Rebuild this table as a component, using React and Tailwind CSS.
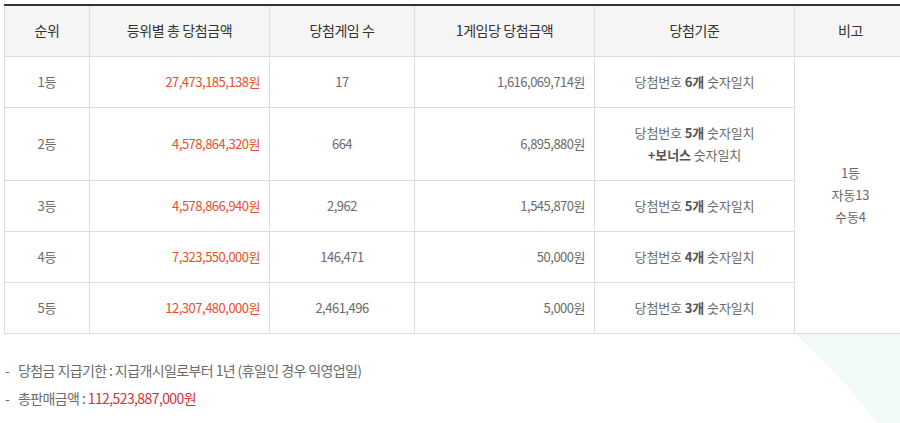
const rows = [
  { rank: '1등', total: '27,473,185,138원', count: '17', per: '1,616,069,714원', rule: [['당첨번호 ', '6개', ' 숫자일치']], h: 'h-[51px]' },
  { rank: '2등', total: '4,578,864,320원', count: '664', per: '6,895,880원', rule: [['당첨번호 ', '5개', ' 숫자일치'], ['', '+보너스', ' 숫자일치']], h: 'h-[73px]' },
  { rank: '3등', total: '4,578,866,940원', count: '2,962', per: '1,545,870원', rule: [['당첨번호 ', '5개', ' 숫자일치']], h: 'h-[51px]' },
  { rank: '4등', total: '7,323,550,000원', count: '146,471', per: '50,000원', rule: [['당첨번호 ', '4개', ' 숫자일치']], h: 'h-[51px]' },
  { rank: '5등', total: '12,307,480,000원', count: '2,461,496', per: '5,000원', rule: [['당첨번호 ', '3개', ' 숫자일치']], h: 'h-[51px]' },
];

const font = { fontFamily: '"Noto Sans CJK KR", "Noto Sans", sans-serif' };

export default function App() {
  return (
    <div className="relative w-[900px] h-[423px] overflow-hidden bg-white text-[13px] tracking-[-0.1px] text-[#6b6b6b]" style={font}>
      <svg className="absolute left-0 top-0" width="900" height="423">
        <path d="M795 334 L900 334 L900 423 L877 423 C860 400 830 364 795 334 Z" fill="#f1faf8" />
      </svg>

      <div className="relative pl-[4px] pt-[4px]">
        <table className="table-fixed border-collapse w-[902px] bg-white border-t-2 border-t-[#333]">
          <colgroup>
            <col className="w-[85px]" />
            <col className="w-[180px]" />
            <col className="w-[145px]" />
            <col className="w-[180px]" />
            <col className="w-[200px]" />
            <col className="w-[112px]" />
          </colgroup>
          <thead>
            <tr className="h-[51px] bg-[#f5f5f5] text-[#333] text-[14px] tracking-[-0.4px]">
              <th className="font-normal border border-[#ddd] border-t-0">순위</th>
              <th className="font-normal border border-[#ddd] border-t-0">등위별 총 당첨금액</th>
              <th className="font-normal border border-[#ddd] border-t-0">당첨게임 수</th>
              <th className="font-normal border border-[#ddd] border-t-0">1게임당 당첨금액</th>
              <th className="font-normal border border-[#ddd] border-t-0">당첨기준</th>
              <th className="font-normal border border-[#ddd] border-t-0">비고</th>
            </tr>
          </thead>
          <tbody>
            {rows.map((r, i) => (
              <tr key={r.rank} className={r.h}>
                <td className="border border-[#ddd] text-center">{r.rank}</td>
                <td className="border border-[#ddd] text-right pr-[9px] tracking-[-0.5px] text-[#e8502a]">{r.total}</td>
                <td className="border border-[#ddd] text-center tracking-[-0.5px]">{r.count}</td>
                <td className="border border-[#ddd] text-right pr-[9px] tracking-[-0.5px]">{r.per}</td>
                <td className="border border-[#ddd] text-center leading-[22px]">
                  {r.rule.map((l, j) => (
                    <div key={j}>
                      {l[0]}<b className="text-[#555] font-semibold">{l[1]}</b>{l[2]}
                    </div>
                  ))}
                </td>
                {i === 0 && (
                  <td rowSpan={5} className="border border-[#ddd] text-center leading-[22px]">
                    <div>1등</div>
                    <div>자동13</div>
                    <div>수동4</div>
                  </td>
                )}
              </tr>
            ))}
          </tbody>
        </table>

        <ul className="mt-[22px] leading-[28px] text-[14px] tracking-[-0.6px]">
          <li className="flex">
            <span className="w-[14px] pl-[1px]">-</span>
            <span>당첨금 지급기한 : 지급개시일로부터 1년 (휴일인 경우 익영업일)</span>
          </li>
          <li className="flex">
            <span className="w-[14px] pl-[1px]">-</span>
            <span>총판매금액 : <span className="text-[#d8303a]">112,523,887,000원</span></span>
          </li>
        </ul>
      </div>
    </div>
  );
}
